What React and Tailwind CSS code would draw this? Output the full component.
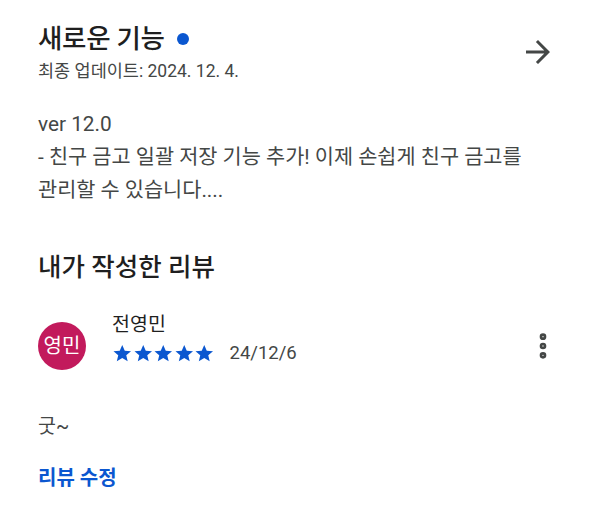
import { MoreVertical } from "lucide-react";

const Star = () => (
  <svg width="20.5" height="20.5" viewBox="0 0 24 24" fill="#0b57d0">
    <path d="M12 2.2l2.95 6.75 7.3.6-5.55 4.8 1.65 7.15L12 17.7l-6.35 3.8 1.65-7.15-5.55-4.8 7.3-.6z" />
  </svg>
);

const ArrowForward = () => (
  <svg width="36" height="36" viewBox="0 0 24 24" fill="#444746" className="shrink-0">
    <path d="M12 4l-1.41 1.41L16.17 11H4v2h12.17l-5.58 5.59L12 20l8-8z" />
  </svg>
);

const App = () => {
  return (
    <div className="w-[600px] h-[529px] bg-white text-[#1f1f1f] font-['Roboto','Noto_Sans_CJK_KR',sans-serif]">
      <div className="pl-[38px] pr-[44px] pt-[20px]">

        {/* What's new header */}
        <div className="flex items-center justify-between">
          <div>
            <div className="flex items-center gap-[12px]">
              <h1 className="text-[26.5px] leading-[38px] font-medium tracking-[-0.3px]">새로운 기능</h1>
              <span className="w-[12px] h-[12px] rounded-full bg-[#0b57d0]" />
            </div>
            <p className="text-[17.5px] leading-[26px] text-[#444746]">최종 업데이트: 2024. 12. 4.</p>
          </div>
          <ArrowForward />
        </div>

        {/* Release notes */}
        <div className="mt-[24px] text-[20.8px] leading-[33px] text-[#444746]">
          <p>ver 12.0</p>
          <p>- 친구 금고 일괄 저장 기능 추가! 이제 손쉽게 친구 금고를</p>
          <p>관리할 수 있습니다....</p>
        </div>

        {/* My review */}
        <h2 className="mt-[42px] text-[25.5px] leading-[36px] font-medium">내가 작성한 리뷰</h2>

        <div className="mt-[26px] flex items-start">
          <div className="w-[48px] h-[48px] mt-[11px] rounded-full bg-[#c21a5c] flex items-center justify-center text-white text-[20px] shrink-0">
            영민
          </div>
          <div className="ml-[26px] flex-1">
            <p className="text-[19.5px] leading-[28px]">전영민</p>
            <div className="flex items-center h-[28px]">
              <div className="flex">
                <Star /><Star /><Star /><Star /><Star />
              </div>
              <span className="ml-[15px] text-[18.5px] leading-[28px] text-[#444746]">24/12/6</span>
            </div>
          </div>
          <MoreVertical size={32} strokeWidth={3} className="text-[#444746] -mr-[3px] mt-[19px] shrink-0" />
        </div>

        <p className="mt-[43px] text-[19.5px] leading-[28px] text-[#444746]">굿~</p>

        <p className="mt-[23px] text-[20px] leading-[28px] font-semibold text-[#0b57d0]">리뷰 수정</p>
      </div>
    </div>
  );
};

export default App;
